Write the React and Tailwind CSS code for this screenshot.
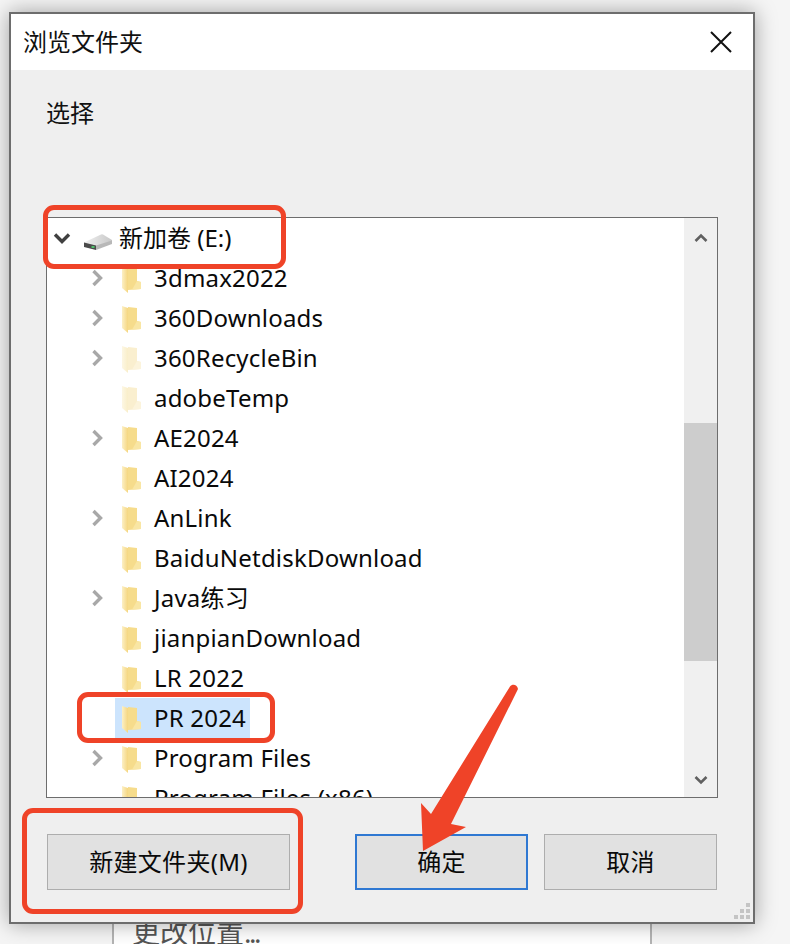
import React from "react";

const FONT = { fontFamily: '"Noto Sans", "Noto Sans CJK SC", sans-serif' };

function Folder({ faded }) {
  return (
    <svg width="20" height="30" viewBox="0 0 20 30" className="shrink-0">
      <defs>
        <linearGradient id={faded ? "fa" : "fb"} x1="0" y1="0" x2="1" y2="0">
          <stop offset="0" stopColor={faded ? "#fdf7e4" : "#fcf0c6"} />
          <stop offset="1" stopColor={faded ? "#f9eec9" : "#f5d680"} />
        </linearGradient>
      </defs>
      <path d="M7 4l9 1v13l4 1v7l-13 1z" fill={faded ? "#faefcf" : "#f6dc8c"} />
      <path d="M16 18l4 1v7l-9 .7z" fill={faded ? "#fcf4dc" : "#f9e6a4"} />
      <path d="M1 3l6 2v25l-6-5z" fill={`url(#${faded ? "fa" : "fb"})`} />
    </svg>
  );
}

function Chevron({ open }) {
  return open ? (
    <svg width="20" height="14" viewBox="0 0 20 14" className="shrink-0">
      <path d="M3 3.500l7 7 7-7" fill="none" stroke="#404040" strokeWidth="3.400" />
    </svg>
  ) : (
    <svg width="14" height="20" viewBox="0 0 14 20" className="shrink-0">
      <path d="M3.500 3l7 7-7 7" fill="none" stroke="#a8a8a8" strokeWidth="3.400" />
    </svg>
  );
}

const rows = [
  ["3dmax2022", true, false],
  ["360Downloads", true, false],
  ["360RecycleBin", true, true],
  ["adobeTemp", false, true],
  ["AE2024", true, false],
  ["AI2024", false, false],
  ["AnLink", true, false],
  ["BaiduNetdiskDownload", false, false],
  ["Java练习", true, false],
  ["jianpianDownload", false, false],
  ["LR 2022", false, false],
  ["PR 2024", false, false, true],
  ["Program Files", true, false],
  ["Program Files (x86)", false, false],
];

function Row({ label, chev, faded, selected }) {
  return (
    <div className="flex h-10 shrink-0 items-center">
      <div className="flex w-[68px] shrink-0 justify-end pr-[11px]">
        {chev ? <Chevron /> : null}
      </div>
      <div className={`flex h-10 items-center ${selected ? "bg-[#cce4fd]" : ""}`}>
        <div className="ml-[6px] mr-[13px]">
          <Folder faded={faded} />
        </div>
        <span className="pr-[4px] text-[24px] tracking-[0.2px] text-[#0a0a0a] whitespace-nowrap">{label}</span>
      </div>
    </div>
  );
}

function Btn({ w, focus, children }) {
  return (
    <button
      className={`flex h-[56px] items-center justify-center bg-[#e1e1e1] text-[24px] tracking-[0.3px] text-[#0a0a0a] ${w} ${
        focus ? "border-2 border-[#2f78d2]" : "border border-[#adadad]"
      }`}
    >
      {children}
    </button>
  );
}

export default function App() {
  return (
    <div style={FONT} className="relative h-[944px] w-[790px] overflow-hidden bg-[#f5f5f5] pl-[9px] pt-[12px]">
      <div className="relative z-10 flex h-[912px] w-[746px] flex-col border-2 border-[#6d6d6d] bg-[#efefef] shadow-[0_0_20px_rgba(0,0,0,0.35)]">
        <div className="flex h-[56px] shrink-0 items-center justify-between bg-white pb-[1px] pl-[12px] pr-[21px]">
          <span className="text-[24px] text-[#111]">浏览文件夹</span>
          <svg width="22" height="22" viewBox="0 0 22 22">
            <path d="M1 1l20 20M21 1L1 21" stroke="#111" strokeWidth="2" />
          </svg>
        </div>
        <div className="h-[147px] shrink-0 pl-[35px] pt-[25px] text-[24px] leading-[36px] text-[#111]">选择</div>
        <div className="mx-[35px] flex h-[581px] w-[672px] shrink-0 border border-[#6d6d6d] bg-white">
          <div className="flex min-w-0 flex-1 flex-col overflow-hidden">
            <div className="flex h-10 shrink-0 items-center pl-[5px]">
              <Chevron open />
              <svg width="30" height="18" viewBox="0 0 30 18" className="ml-[11px] mt-[8px] shrink-0">
                <defs>
                  <linearGradient id="dt" x1="0" y1="0" x2="1" y2="0">
                    <stop offset="0" stopColor="#f0f0f0" />
                    <stop offset="1" stopColor="#c8c8c8" />
                  </linearGradient>
                </defs>
                <path d="M1 9.500L18 1.500q1-.4 2 0L29 7v2.500L12 14 1 11z" fill="url(#dt)" />
                <path d="M1 9.500L13 12.500v4.500L1 14z" fill="#4a4a4a" />
                <path d="M13 12.500L29 7.500v3.500L13 17z" fill="#b8b8b8" />
                <rect x="8.500" y="13" width="3" height="2" fill="#4fbf6b" />
              </svg>
              <span className="ml-[6px] text-[24px] text-[#0a0a0a]">新加卷 (E:)</span>
            </div>
            {rows.map((r) => (
              <Row key={r[0]} label={r[0]} chev={r[1]} faded={r[2]} selected={r[3]} />
            ))}
          </div>
          <div className="flex w-[33px] shrink-0 flex-col bg-[#f0f0f0]">
            <div className="flex h-[34px] items-center justify-center pt-[6px]">
              <svg width="14" height="10" viewBox="0 0 14 10">
                <path d="M1.500 8l5.500-5.500L12.500 8" fill="none" stroke="#606060" strokeWidth="2.600" />
              </svg>
            </div>
            <div className="mt-[171px] h-[238px] bg-[#cdcdcd]" />
            <div className="flex flex-1 items-end justify-center pb-[12px]">
              <svg width="14" height="10" viewBox="0 0 14 10">
                <path d="M1.500 2l5.500 5.500L12.500 2" fill="none" stroke="#606060" strokeWidth="2.600" />
              </svg>
            </div>
          </div>
        </div>
        <div className="relative flex flex-1 pl-[36px] pt-[36px]">
          <Btn w="w-[243px]">新建文件夹(M)</Btn>
          <div className="ml-[65px]">
            <Btn w="w-[173px]" focus>确定</Btn>
          </div>
          <div className="ml-[16px]">
            <Btn w="w-[173px]">取消</Btn>
          </div>
          <div className="absolute bottom-[3px] right-[3px] grid grid-cols-3 gap-[2px]">
            {[0, 0, 1, 0, 1, 1, 1, 1, 1].map((on, i) => (
              <div key={i} className={`h-[4px] w-[4px] ${on ? "bg-[#c4c4c4]" : ""}`} />
            ))}
          </div>
        </div>
      </div>

      <div className="-mt-[20px] ml-[103px] h-[60px] w-[540px] border-x-2 border-[#b4b4b4] bg-white pl-[18px] pt-[12px] text-[28px] leading-[32px] text-[#555]">
        更改位置<span className="tracking-[-2.500px]">...</span>
      </div>

      {/* annotations */}
      <div className="absolute left-[43px] top-[205px] z-20 h-[64px] w-[243px] rounded-[11px] border-[5px] border-[#ef4328]" />
      <div className="absolute left-[77px] top-[692px] z-20 h-[51px] w-[198px] rounded-[11px] border-[5px] border-[#ef4328]" />
      <div className="absolute left-[22px] top-[808px] z-20 h-[106px] w-[281px] rounded-[11px] border-[5px] border-[#ef4328]" />
      <svg className="absolute left-0 top-0 z-20" width="790" height="944" viewBox="0 0 790 944">
        <path
          d="M510 686.500C512 684 517 684 518 689L451 824L466 827L423 851L421 803L431 814Z"
          fill="#ef4328"
        />
      </svg>
    </div>
  );
}
